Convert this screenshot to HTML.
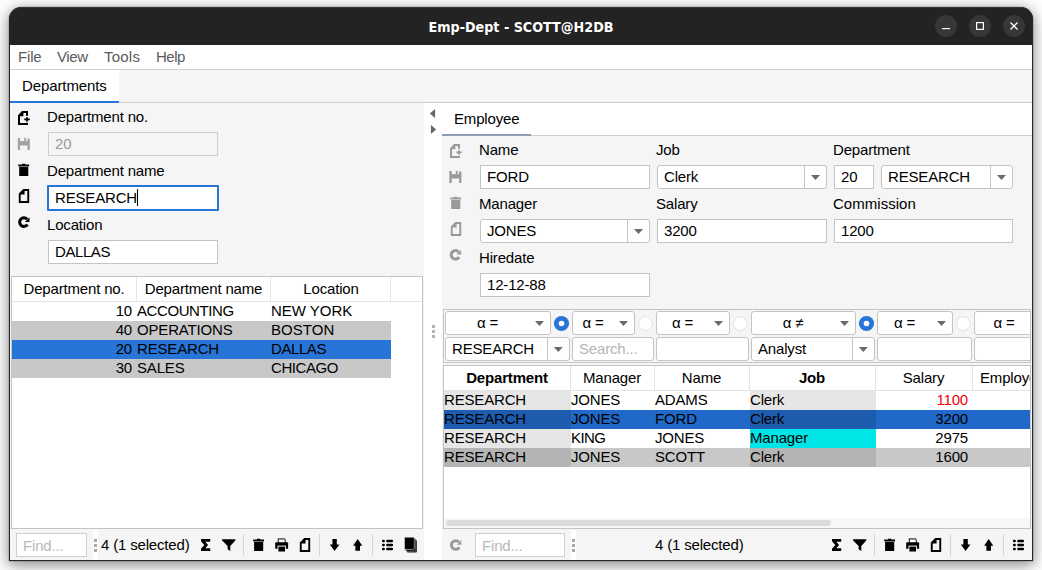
<!DOCTYPE html>
<html><head><meta charset="utf-8"><title>Emp-Dept - SCOTT@H2DB</title>
<style>
html,body{margin:0;padding:0}
body{width:1042px;height:570px;overflow:hidden;position:relative;background:#f0f0f0;font-family:"Liberation Sans",sans-serif;font-size:15px;letter-spacing:-0.17px;color:#000}
#stage{position:absolute;left:0;top:0;width:1042px;height:570px;overflow:hidden;background:#fdfdfd}
#stage div,#stage svg{position:absolute}
.t{white-space:nowrap;line-height:20px;height:20px}
.title{color:#fff;letter-spacing:0;font-family:"DejaVu Sans Condensed","DejaVu Sans","Liberation Sans",sans-serif;font-weight:bold;font-size:14.2px;text-align:center}
#win{border-radius:12.5px 12.5px 0 0;box-shadow:0 3px 14px 1px rgba(0,0,0,.45),0 0 0 1px rgba(0,0,0,.10);background:#f5f5f5}
#frame{border-radius:12.5px 12.5px 0 0;box-sizing:border-box;border:1px solid #262626;border-top:none;pointer-events:none}
</style></head><body><div id="stage">
<div id="win" style="left:9px;top:7px;width:1024px;height:554px"></div>
<div style="left:9px;top:7px;width:1024px;height:38px;background:#232323;border-radius:12.5px 12.5px 0 0;box-shadow:inset 0 1px 0 #343434"></div>
<div class="title" style="left:9px;top:8px;width:1024px;height:38px;line-height:38px">Emp-Dept - SCOTT@H2DB</div>
<svg style="left:935px;top:15px" width="22" height="22" viewBox="0 0 22 22"><circle cx="11" cy="11" r="11" fill="#373737"/><path d="M7,13.6 H15" stroke="#fff" stroke-width="1.2"/></svg>
<svg style="left:969px;top:15px" width="22" height="22" viewBox="0 0 22 22"><circle cx="11" cy="11" r="11" fill="#373737"/><rect x="7.6" y="7.6" width="6.8" height="6.8" fill="none" stroke="#fff" stroke-width="1.2"/></svg>
<svg style="left:1003px;top:15px" width="22" height="22" viewBox="0 0 22 22"><circle cx="11" cy="11" r="11" fill="#373737"/><path d="M7.5,7.5 L14.5,14.5 M14.5,7.5 L7.5,14.5" stroke="#fff" stroke-width="1.3"/></svg>
<div style="left:10px;top:45px;width:1022px;height:515px;background:#f5f5f5"></div>
<div style="left:10px;top:45px;width:1022px;height:24px;background:#fff"></div>
<div style="left:10px;top:69px;width:1022px;height:1px;background:#d0d0d0"></div>
<div class="t" style="left:18px;top:47px;color:#5a5a5a">File</div>
<div class="t" style="left:57px;top:47px;letter-spacing:-0.42px;color:#5a5a5a">View</div>
<div class="t" style="left:104px;top:47px;letter-spacing:0.23px;color:#5a5a5a">Tools</div>
<div class="t" style="left:156px;top:47px;letter-spacing:-0.52px;color:#5a5a5a">Help</div>
<div style="left:10px;top:70px;width:109px;height:33px;background:#fff"></div>
<div style="left:10px;top:102px;width:1022px;height:1px;background:#cfcfcf"></div>
<div style="left:10px;top:101px;width:109px;height:2px;background:#2675d7"></div>
<div class="t" style="left:22px;top:76px;letter-spacing:-0.10px;">Departments</div>
<svg style="left:13px;top:108px" width="21" height="21" viewBox="0 0 21 21" fill="#000"><path fill-rule="evenodd" d="M9,3 H15 V17 H5 V7.2 Z M10.4,5 H13 V15 H7 V8.3 H10.4 Z"/><rect x="12.6" y="7.8" width="3" height="7" fill="#f5f5f5"/><path d="M11.3,11.4 H16.8 M13.9,9.2 V13.6" stroke="#f5f5f5" stroke-width="3.6" fill="none"/><path d="M11.3,11.4 H16.8 M13.9,9.2 V13.6" stroke="#000" stroke-width="1.8" fill="none"/></svg>
<svg style="left:13px;top:133px" width="21" height="21" viewBox="0 0 21 21" fill="#a2a2a2"><g transform="translate(0.80,0.90)"><path d="M4,4 H14.4 L16,5.6 V16 H4 Z"/><rect x="6.3" y="3.5" width="7.4" height="3.7" fill="#f5f5f5"/><rect x="10.4" y="4" width="1.8" height="3.2"/><rect x="6.3" y="11.6" width="7.4" height="5" fill="#f5f5f5"/></g></svg>
<svg style="left:13px;top:160px" width="21" height="21" viewBox="0 0 21 21" fill="#000"><g transform="translate(0.70,0.00)"><path d="M8.4,3.7 H11.6 V4.4 H15.4 V6.5 H4.6 V4.4 H8.4 Z"/><path d="M5.5,7 H14.6 V15.4 Q14.6,16 14,16 H6.1 Q5.5,16 5.5,15.4 Z"/></g></svg>
<svg style="left:14px;top:186px" width="21" height="21" viewBox="0 0 21 21" fill="#000"><path fill-rule="evenodd" d="M9.2,3 H15.2 V17 H4.8 V7.4 Z M10.6,4.9 V8.6 H6.7 V15.1 H13.3 V4.9 Z"/></svg>
<svg style="left:13px;top:212px" width="21" height="21" viewBox="0 0 21 21" fill="#000"><g transform="translate(0.90,0.10)"><path fill="none" stroke="#000" stroke-width="3" d="M13.6,12.4 A4.3,4.3 0 1 1 13.2,7.1"/><path d="M15.6,5.2 V9.8 H11 Z"/></g></svg>
<div class="t" style="left:47px;top:107px;">Department no.</div>
<div style="left:48px;top:132px;width:170px;height:24px;background:#fff;border:1px solid #c4c4c4;box-sizing:border-box;background:#f5f5f5;border-color:#cfcfcf"></div>
<div class="t" style="left:55px;top:134px;color:#9a9a9a">20</div>
<div class="t" style="left:47px;top:161px;">Department name</div>
<div style="left:47px;top:185px;width:172px;height:26px;background:#fff;border:2px solid #2675d7;box-sizing:border-box;border-radius:1px"></div>
<div class="t" style="left:55px;top:188px;">RESEARCH</div>
<div style="left:137px;top:189px;width:1px;height:17px;background:#000"></div>
<div class="t" style="left:47px;top:215px;">Location</div>
<div style="left:48px;top:240px;width:170px;height:24px;background:#fff;border:1px solid #c4c4c4;box-sizing:border-box;"></div>
<div class="t" style="left:55px;top:242px;letter-spacing:-0.42px;">DALLAS</div>
<div style="left:11px;top:276px;width:412px;height:253px;background:#fff;border:1px solid #c4c4c4;box-sizing:border-box"></div>
<div style="left:12px;top:301px;width:410px;height:1px;background:#e4e4e4"></div>
<div style="left:136px;top:277px;width:1px;height:24px;background:#e4e4e4"></div>
<div style="left:270px;top:277px;width:1px;height:24px;background:#e4e4e4"></div>
<div style="left:390px;top:277px;width:1px;height:24px;background:#e4e4e4"></div>
<div class="t" style="left:12px;top:279px;width:124px;text-align:center">Department no.</div>
<div class="t" style="left:137px;top:279px;width:133px;text-align:center">Department name</div>
<div class="t" style="left:271px;top:279px;width:120px;text-align:center">Location</div>
<div style="left:12px;top:302px;width:379px;height:19px;background:#fff"></div>
<div class="t" style="left:12px;top:301px;width:120px;text-align:right">10</div>
<div class="t" style="left:137px;top:301px;letter-spacing:-0.42px;">ACCOUNTING</div>
<div class="t" style="left:271px;top:301px;letter-spacing:-0.02px;">NEW YORK</div>
<div style="left:12px;top:321px;width:379px;height:19px;background:#c8c8c8"></div>
<div class="t" style="left:12px;top:320px;width:120px;text-align:right">40</div>
<div class="t" style="left:137px;top:320px;">OPERATIONS</div>
<div class="t" style="left:271px;top:320px;letter-spacing:0.03px;">BOSTON</div>
<div style="left:12px;top:340px;width:379px;height:19px;background:#2675d7"></div>
<div class="t" style="left:12px;top:339px;width:120px;text-align:right">20</div>
<div class="t" style="left:137px;top:339px;">RESEARCH</div>
<div class="t" style="left:271px;top:339px;letter-spacing:-0.42px;">DALLAS</div>
<div style="left:12px;top:359px;width:379px;height:19px;background:#c8c8c8"></div>
<div class="t" style="left:12px;top:358px;width:120px;text-align:right">30</div>
<div class="t" style="left:137px;top:358px;">SALES</div>
<div class="t" style="left:271px;top:358px;letter-spacing:-0.42px;">CHICAGO</div>
<div style="left:16px;top:533px;width:71px;height:24px;background:#fff;border:1px solid #c4c4c4;box-sizing:border-box;border-color:#cfcfcf"></div>
<div class="t" style="left:23px;top:536px;color:#b8b8b8">Find...</div>
<div style="left:93px;top:530px;width:5px;height:30px;background:#fff"></div>
<div style="left:94px;top:539px;width:3px;height:3px;background:#a8a8a8"></div>
<div style="left:94px;top:544px;width:3px;height:3px;background:#a8a8a8"></div>
<div style="left:94px;top:549px;width:3px;height:3px;background:#a8a8a8"></div>
<div class="t" style="left:101px;top:535px;">4 (1 selected)</div>
<svg style="left:195px;top:535px" width="21" height="21" viewBox="0 0 21 21" fill="#000"><g transform="translate(0.40,0.00)"><path d="M5.6,4 H14.8 V6.7 H9.9 L12.7,10 L9.9,13.3 H14.8 V16 H5.6 V13.8 L8.9,10 L5.6,6.2 Z"/></g></svg>
<svg style="left:218px;top:535px" width="21" height="21" viewBox="0 0 21 21" fill="#000"><g transform="translate(0.40,0.00)"><path d="M3.9,4.2 H16.7 Q17.4,4.7 16.9,5.4 L11.9,10.9 V15.9 L9.2,14.3 V10.9 L3.7,5.4 Q3.2,4.7 3.9,4.2 Z"/></g></svg>
<div style="left:243px;top:534px;width:1px;height:22px;background:#d4d4d4"></div>
<svg style="left:248px;top:535px" width="21" height="21" viewBox="0 0 21 21" fill="#000"><g transform="translate(0.60,0.00)"><path d="M8.4,3.7 H11.6 V4.4 H15.4 V6.5 H4.6 V4.4 H8.4 Z"/><path d="M5.5,7 H14.6 V15.4 Q14.6,16 14,16 H6.1 Q5.5,16 5.5,15.4 Z"/></g></svg>
<svg style="left:271px;top:535px" width="21" height="21" viewBox="0 0 21 21" fill="#000"><g transform="translate(0.10,0.00)"><path d="M6.6,3.2 H13.6 L14.8,4.4 V8 H6.6 Z" fill="#444"/><rect x="7.9" y="4.6" width="5.6" height="3.4" fill="#fff"/><path d="M5.1,7.3 H16 Q17,7.3 17,8.3 V13.7 H4.1 V8.3 Q4.1,7.3 5.1,7.3 Z"/><rect x="6.4" y="10.6" width="8.4" height="6.4" fill="#f5f5f5"/><rect x="7.3" y="11.6" width="6.6" height="4.9"/></g></svg>
<svg style="left:295px;top:535px" width="21" height="21" viewBox="0 0 21 21" fill="#000"><path fill-rule="evenodd" d="M9.2,3 H15.2 V17 H4.8 V7.4 Z M10.6,4.9 V8.6 H6.7 V15.1 H13.3 V4.9 Z"/></svg>
<div style="left:319px;top:534px;width:1px;height:22px;background:#d4d4d4"></div>
<svg style="left:324px;top:535px" width="21" height="21" viewBox="0 0 21 21" fill="#000"><g transform="translate(0.60,0.00)"><path d="M7.8,4 H12.2 V9.4 H14.8 L10,16.1 L5.2,9.4 H7.8 Z"/></g></svg>
<svg style="left:347px;top:535px" width="21" height="21" viewBox="0 0 21 21" fill="#000"><g transform="translate(0.70,0.00)"><path d="M7.7,15.8 H12.3 V10.8 H14.6 L10,3.9 L5.4,10.8 H7.7 Z"/></g></svg>
<div style="left:372px;top:534px;width:1px;height:22px;background:#d4d4d4"></div>
<svg style="left:377px;top:535px" width="21" height="21" viewBox="0 0 21 21" fill="#000"><g transform="translate(0.60,0.00)"><rect x="4.4" y="4.7" width="2.8" height="2.5" rx="1"/><rect x="8.6" y="4.7" width="6.8" height="2.5" rx="1"/><rect x="4.4" y="8.7" width="2.8" height="2.5" rx="1"/><rect x="8.6" y="8.7" width="6.8" height="2.5" rx="1"/><rect x="4.4" y="12.8" width="2.8" height="2.5" rx="1"/><rect x="8.6" y="12.8" width="6.8" height="2.5" rx="1"/></g></svg>
<svg style="left:400px;top:535px" width="21" height="21" viewBox="0 0 21 21" fill="#000"><g transform="translate(0.50,0.00)"><rect x="6.4" y="4.9" width="10" height="12.6" rx="1" fill="#222"/><rect x="5.3" y="3.7" width="9.9" height="12.4" rx="1" stroke="#aaa" stroke-width=".5"/><rect x="4" y="2.2" width="9.8" height="12.2" rx="1" stroke="#ddd" stroke-width=".6"/></g></svg>
<div style="left:424px;top:103px;width:18px;height:457px;background:#fff"></div>
<svg style="left:428px;top:108px" width="10" height="28" viewBox="0 0 10 28" fill="#666"><path d="M7.1,1.1 V9.9 L1.8,5.5 Z M2.9,17 V26 L8.2,21.5 Z"/></svg>
<div style="left:432px;top:325px;width:3px;height:3px;background:#b4b4b4"></div>
<div style="left:432px;top:330px;width:3px;height:3px;background:#b4b4b4"></div>
<div style="left:432px;top:335px;width:3px;height:3px;background:#b4b4b4"></div>
<div style="left:442px;top:103px;width:590px;height:32px;background:#fff"></div>
<div style="left:442px;top:135px;width:590px;height:1px;background:#cfcfcf"></div>
<div style="left:442px;top:134px;width:89px;height:2px;background:#8d9db8"></div>
<div class="t" style="left:454px;top:109px;">Employee</div>
<svg style="left:445px;top:141px" width="21" height="21" viewBox="0 0 21 21" fill="#9a9a9a"><path fill-rule="evenodd" d="M9,3 H15 V17 H5 V7.2 Z M10.4,5 H13 V15 H7 V8.3 H10.4 Z"/><rect x="12.6" y="7.8" width="3" height="7" fill="#f5f5f5"/><path d="M11.3,11.4 H16.8 M13.9,9.2 V13.6" stroke="#f5f5f5" stroke-width="3.6" fill="none"/><path d="M11.3,11.4 H16.8 M13.9,9.2 V13.6" stroke="#9a9a9a" stroke-width="1.8" fill="none"/></svg>
<svg style="left:445px;top:166px" width="21" height="21" viewBox="0 0 21 21" fill="#9a9a9a"><g transform="translate(0.40,0.90)"><path d="M4,4 H14.4 L16,5.6 V16 H4 Z"/><rect x="6.3" y="3.5" width="7.4" height="3.7" fill="#f5f5f5"/><rect x="10.4" y="4" width="1.8" height="3.2"/><rect x="6.3" y="11.6" width="7.4" height="5" fill="#f5f5f5"/></g></svg>
<svg style="left:445px;top:193px" width="21" height="21" viewBox="0 0 21 21" fill="#9a9a9a"><g transform="translate(0.70,0.00)"><path d="M8.4,3.7 H11.6 V4.4 H15.4 V6.5 H4.6 V4.4 H8.4 Z"/><path d="M5.5,7 H14.6 V15.4 Q14.6,16 14,16 H6.1 Q5.5,16 5.5,15.4 Z"/></g></svg>
<svg style="left:446px;top:219px" width="21" height="21" viewBox="0 0 21 21" fill="#9a9a9a"><path fill-rule="evenodd" d="M9.2,3 H15.2 V17 H4.8 V7.4 Z M10.6,4.9 V8.6 H6.7 V15.1 H13.3 V4.9 Z"/></svg>
<svg style="left:445px;top:244px" width="21" height="21" viewBox="0 0 21 21" fill="#9a9a9a"><g transform="translate(0.50,0.80)"><path fill="none" stroke="#9a9a9a" stroke-width="3" d="M13.6,12.4 A4.3,4.3 0 1 1 13.2,7.1"/><path d="M15.6,5.2 V9.8 H11 Z"/></g></svg>
<div class="t" style="left:479px;top:140px;">Name</div>
<div class="t" style="left:656px;top:140px;">Job</div>
<div class="t" style="left:833px;top:140px;">Department</div>
<div style="left:480px;top:165px;width:170px;height:24px;background:#fff;border:1px solid #c4c4c4;box-sizing:border-box;"></div>
<div class="t" style="left:487px;top:167px;">FORD</div>
<div style="left:657px;top:165px;width:170px;height:24px;background:#fff;border:1px solid #c4c4c4;box-sizing:border-box;border-radius:3px"></div>
<div style="left:804px;top:166px;width:1px;height:22px;background:#c4c4c4"></div>
<svg style="left:809px;top:173px" width="12" height="8" viewBox="0 0 12 8" fill="#6a6a6a"><path d="M2.00,2.10 H11.00 L6.50,7.10 Z"/></svg>
<div class="t" style="left:664px;top:167px;">Clerk</div>
<div style="left:834px;top:165px;width:40px;height:24px;background:#fff;border:1px solid #c4c4c4;box-sizing:border-box;"></div>
<div class="t" style="left:841px;top:167px;">20</div>
<div style="left:881px;top:165px;width:132px;height:24px;background:#fff;border:1px solid #c4c4c4;box-sizing:border-box;border-radius:3px"></div>
<div style="left:990px;top:166px;width:1px;height:22px;background:#c4c4c4"></div>
<svg style="left:995px;top:173px" width="12" height="8" viewBox="0 0 12 8" fill="#6a6a6a"><path d="M2.00,2.10 H11.00 L6.50,7.10 Z"/></svg>
<div class="t" style="left:888px;top:167px;">RESEARCH</div>
<div class="t" style="left:479px;top:194px;">Manager</div>
<div class="t" style="left:656px;top:194px;">Salary</div>
<div class="t" style="left:833px;top:194px;letter-spacing:0.03px;">Commission</div>
<div style="left:480px;top:219px;width:170px;height:24px;background:#fff;border:1px solid #c4c4c4;box-sizing:border-box;border-radius:3px"></div>
<div style="left:627px;top:220px;width:1px;height:22px;background:#c4c4c4"></div>
<svg style="left:632px;top:227px" width="12" height="8" viewBox="0 0 12 8" fill="#6a6a6a"><path d="M2.00,2.10 H11.00 L6.50,7.10 Z"/></svg>
<div class="t" style="left:487px;top:221px;">JONES</div>
<div style="left:657px;top:219px;width:170px;height:24px;background:#fff;border:1px solid #c4c4c4;box-sizing:border-box;"></div>
<div class="t" style="left:664px;top:221px;">3200</div>
<div style="left:834px;top:219px;width:179px;height:24px;background:#fff;border:1px solid #c4c4c4;box-sizing:border-box;"></div>
<div class="t" style="left:841px;top:221px;">1200</div>
<div class="t" style="left:479px;top:248px;">Hiredate</div>
<div style="left:480px;top:273px;width:170px;height:24px;background:#fff;border:1px solid #c4c4c4;box-sizing:border-box;"></div>
<div class="t" style="left:487px;top:275px;">12-12-88</div>
<div style="left:443px;top:309px;width:588px;height:54px;background:#f5f5f5;border:1px solid #c4c4c4;box-sizing:border-box"></div>
<div style="left:0;top:0;width:1030px;height:570px;overflow:hidden">
<div style="left:445px;top:311px;width:106px;height:24px;background:#fff;border:1px solid #c4c4c4;box-sizing:border-box;border-radius:3px"></div>
<svg style="left:533px;top:319px" width="12" height="8" viewBox="0 0 12 8" fill="#6a6a6a"><path d="M2.00,1.90 H11.00 L6.50,6.90 Z"/></svg>
<div class="t" style="left:446px;top:313px;width:83px;text-align:center">α =</div>
<svg style="left:551px;top:313px" width="20" height="20" viewBox="0 0 20 20"><circle cx="10.5" cy="10.5" r="7.6" fill="#2675d7"/><circle cx="10.5" cy="10.5" r="2.8" fill="#fff"/></svg>
<div style="left:445px;top:337px;width:125px;height:24px;background:#fff;border:1px solid #c4c4c4;box-sizing:border-box;border-radius:3px"></div>
<div style="left:547px;top:338px;width:1px;height:22px;background:#c4c4c4"></div>
<svg style="left:552px;top:345px" width="12" height="8" viewBox="0 0 12 8" fill="#6a6a6a"><path d="M1.80,1.90 H10.80 L6.30,6.90 Z"/></svg>
<div class="t" style="left:452px;top:339px;">RESEARCH</div>
<div style="left:572px;top:311px;width:63px;height:24px;background:#fff;border:1px solid #c4c4c4;box-sizing:border-box;border-radius:3px"></div>
<svg style="left:617px;top:319px" width="12" height="8" viewBox="0 0 12 8" fill="#6a6a6a"><path d="M2.00,1.90 H11.00 L6.50,6.90 Z"/></svg>
<div class="t" style="left:573px;top:313px;width:40px;text-align:center">α =</div>
<svg style="left:635px;top:313px" width="20" height="20" viewBox="0 0 20 20"><circle cx="10.399999999999977" cy="10.5" r="6.9" fill="#fff" stroke="#e2e2e2" stroke-width="1"/></svg>
<div style="left:572px;top:337px;width:82px;height:24px;background:#fff;border:1px solid #c4c4c4;box-sizing:border-box;border-radius:3px"></div>
<div class="t" style="left:579px;top:339px;color:#b4b4b4">Search...</div>
<div style="left:656px;top:311px;width:74px;height:24px;background:#fff;border:1px solid #c4c4c4;box-sizing:border-box;border-radius:3px"></div>
<svg style="left:712px;top:319px" width="12" height="8" viewBox="0 0 12 8" fill="#6a6a6a"><path d="M2.00,1.90 H11.00 L6.50,6.90 Z"/></svg>
<div class="t" style="left:657px;top:313px;width:51px;text-align:center">α =</div>
<svg style="left:730px;top:313px" width="20" height="20" viewBox="0 0 20 20"><circle cx="10.299999999999955" cy="10.5" r="6.9" fill="#fff" stroke="#e2e2e2" stroke-width="1"/></svg>
<div style="left:656px;top:337px;width:93px;height:24px;background:#fff;border:1px solid #c4c4c4;box-sizing:border-box;border-radius:3px"></div>
<div style="left:751px;top:311px;width:105px;height:24px;background:#fff;border:1px solid #c4c4c4;box-sizing:border-box;border-radius:3px"></div>
<svg style="left:838px;top:319px" width="12" height="8" viewBox="0 0 12 8" fill="#6a6a6a"><path d="M2.00,1.90 H11.00 L6.50,6.90 Z"/></svg>
<div class="t" style="left:752px;top:313px;width:82px;text-align:center">α ≠</div>
<svg style="left:856px;top:313px" width="20" height="20" viewBox="0 0 20 20"><circle cx="10.5" cy="10.5" r="7.6" fill="#2675d7"/><circle cx="10.5" cy="10.5" r="2.8" fill="#fff"/></svg>
<div style="left:751px;top:337px;width:124px;height:24px;background:#fff;border:1px solid #c4c4c4;box-sizing:border-box;border-radius:3px"></div>
<div style="left:852px;top:338px;width:1px;height:22px;background:#c4c4c4"></div>
<svg style="left:857px;top:345px" width="12" height="8" viewBox="0 0 12 8" fill="#6a6a6a"><path d="M1.80,1.90 H10.80 L6.30,6.90 Z"/></svg>
<div class="t" style="left:758px;top:339px;">Analyst</div>
<div style="left:877px;top:311px;width:76px;height:24px;background:#fff;border:1px solid #c4c4c4;box-sizing:border-box;border-radius:3px"></div>
<svg style="left:935px;top:319px" width="12" height="8" viewBox="0 0 12 8" fill="#6a6a6a"><path d="M2.00,1.90 H11.00 L6.50,6.90 Z"/></svg>
<div class="t" style="left:878px;top:313px;width:53px;text-align:center">α =</div>
<svg style="left:953px;top:313px" width="20" height="20" viewBox="0 0 20 20"><circle cx="10.299999999999955" cy="10.5" r="6.9" fill="#fff" stroke="#e2e2e2" stroke-width="1"/></svg>
<div style="left:877px;top:337px;width:95px;height:24px;background:#fff;border:1px solid #c4c4c4;box-sizing:border-box;border-radius:3px"></div>
<div style="left:974px;top:311px;width:81px;height:24px;background:#fff;border:1px solid #c4c4c4;box-sizing:border-box;border-radius:3px"></div>
<svg style="left:1037px;top:319px" width="12" height="8" viewBox="0 0 12 8" fill="#6a6a6a"><path d="M2.00,1.90 H11.00 L6.50,6.90 Z"/></svg>
<div class="t" style="left:975px;top:313px;width:58px;text-align:center">α =</div>
<div style="left:974px;top:337px;width:102px;height:24px;background:#fff;border:1px solid #c4c4c4;box-sizing:border-box;border-radius:3px"></div>
</div>
<div style="left:443px;top:365px;width:588px;height:164px;background:#fff;border:1px solid #c4c4c4;box-sizing:border-box"></div>
<div style="left:444px;top:390px;width:586px;height:1px;background:#e4e4e4"></div>
<div style="left:0;top:0;width:1030px;height:570px;overflow:hidden">
<div style="left:570px;top:366px;width:1px;height:24px;background:#e4e4e4"></div>
<div class="t" style="left:444px;top:368px;width:126px;text-align:center;font-weight:bold">Department</div>
<div style="left:654px;top:366px;width:1px;height:24px;background:#e4e4e4"></div>
<div class="t" style="left:570px;top:368px;width:84px;text-align:center;">Manager</div>
<div style="left:749px;top:366px;width:1px;height:24px;background:#e4e4e4"></div>
<div class="t" style="left:654px;top:368px;width:95px;text-align:center;">Name</div>
<div style="left:875px;top:366px;width:1px;height:24px;background:#e4e4e4"></div>
<div class="t" style="left:749px;top:368px;width:126px;text-align:center;font-weight:bold">Job</div>
<div style="left:972px;top:366px;width:1px;height:24px;background:#e4e4e4"></div>
<div class="t" style="left:875px;top:368px;width:97px;text-align:center;">Salary</div>
<div class="t" style="left:980px;top:368px;">Employee</div>
<div style="left:444px;top:391px;width:586px;height:19px;background:#fff"></div>
<div style="left:444px;top:391px;width:127px;height:19px;background:#e6e6e6"></div>
<div style="left:750px;top:391px;width:126px;height:19px;background:#e6e6e6"></div>
<div class="t" style="left:444px;top:390px;">RESEARCH</div>
<div class="t" style="left:571px;top:390px;">JONES</div>
<div class="t" style="left:655px;top:390px;">ADAMS</div>
<div class="t" style="left:750px;top:390px;">Clerk</div>
<div class="t" style="left:876px;top:390px;width:92px;text-align:right;color:#f6000c">1100</div>
<div style="left:444px;top:410px;width:586px;height:19px;background:#2169c8"></div>
<div style="left:444px;top:410px;width:127px;height:19px;background:#1d5cae"></div>
<div style="left:750px;top:410px;width:126px;height:19px;background:#1d5cae"></div>
<div class="t" style="left:444px;top:409px;">RESEARCH</div>
<div class="t" style="left:571px;top:409px;">JONES</div>
<div class="t" style="left:655px;top:409px;">FORD</div>
<div class="t" style="left:750px;top:409px;">Clerk</div>
<div class="t" style="left:876px;top:409px;width:92px;text-align:right;">3200</div>
<div style="left:444px;top:429px;width:586px;height:19px;background:#fff"></div>
<div style="left:444px;top:429px;width:127px;height:19px;background:#e6e6e6"></div>
<div style="left:750px;top:429px;width:126px;height:19px;background:#00e5e5"></div>
<div class="t" style="left:444px;top:428px;">RESEARCH</div>
<div class="t" style="left:571px;top:428px;letter-spacing:-0.57px;">KING</div>
<div class="t" style="left:655px;top:428px;">JONES</div>
<div class="t" style="left:750px;top:428px;">Manager</div>
<div class="t" style="left:876px;top:428px;width:92px;text-align:right;">2975</div>
<div style="left:444px;top:448px;width:586px;height:19px;background:#c8c8c8"></div>
<div style="left:444px;top:448px;width:127px;height:19px;background:#b4b4b4"></div>
<div style="left:750px;top:448px;width:126px;height:19px;background:#b4b4b4"></div>
<div class="t" style="left:444px;top:447px;">RESEARCH</div>
<div class="t" style="left:571px;top:447px;">JONES</div>
<div class="t" style="left:655px;top:447px;">SCOTT</div>
<div class="t" style="left:750px;top:447px;">Clerk</div>
<div class="t" style="left:876px;top:447px;width:92px;text-align:right;">1600</div>
<div style="left:444px;top:518px;width:586px;height:10px;background:#f7f7f7"></div>
<div style="left:446px;top:520px;width:385px;height:6px;background:#dcdcdc;border-radius:3px"></div>
</div>
<svg style="left:445px;top:535px" width="21" height="21" viewBox="0 0 21 21" fill="#9a9a9a"><g transform="translate(0.70,0.00)"><path fill="none" stroke="#9a9a9a" stroke-width="3" d="M13.6,12.4 A4.3,4.3 0 1 1 13.2,7.1"/><path d="M15.6,5.2 V9.8 H11 Z"/></g></svg>
<div style="left:475px;top:533px;width:90px;height:24px;background:#fff;border:1px solid #c4c4c4;box-sizing:border-box;border-color:#cfcfcf"></div>
<div class="t" style="left:482px;top:536px;color:#b8b8b8">Find...</div>
<div style="left:571px;top:530px;width:5px;height:30px;background:#fff"></div>
<div style="left:572px;top:539px;width:3px;height:3px;background:#a8a8a8"></div>
<div style="left:572px;top:544px;width:3px;height:3px;background:#a8a8a8"></div>
<div style="left:572px;top:549px;width:3px;height:3px;background:#a8a8a8"></div>
<div class="t" style="left:655px;top:535px;">4 (1 selected)</div>
<svg style="left:826px;top:535px" width="21" height="21" viewBox="0 0 21 21" fill="#000"><g transform="translate(0.40,0.00)"><path d="M5.6,4 H14.8 V6.7 H9.9 L12.7,10 L9.9,13.3 H14.8 V16 H5.6 V13.8 L8.9,10 L5.6,6.2 Z"/></g></svg>
<svg style="left:849px;top:535px" width="21" height="21" viewBox="0 0 21 21" fill="#000"><g transform="translate(0.40,0.00)"><path d="M3.9,4.2 H16.7 Q17.4,4.7 16.9,5.4 L11.9,10.9 V15.9 L9.2,14.3 V10.9 L3.7,5.4 Q3.2,4.7 3.9,4.2 Z"/></g></svg>
<div style="left:874px;top:534px;width:1px;height:22px;background:#d4d4d4"></div>
<svg style="left:879px;top:535px" width="21" height="21" viewBox="0 0 21 21" fill="#000"><g transform="translate(0.60,0.00)"><path d="M8.4,3.7 H11.6 V4.4 H15.4 V6.5 H4.6 V4.4 H8.4 Z"/><path d="M5.5,7 H14.6 V15.4 Q14.6,16 14,16 H6.1 Q5.5,16 5.5,15.4 Z"/></g></svg>
<svg style="left:902px;top:535px" width="21" height="21" viewBox="0 0 21 21" fill="#000"><g transform="translate(0.10,0.00)"><path d="M6.6,3.2 H13.6 L14.8,4.4 V8 H6.6 Z" fill="#444"/><rect x="7.9" y="4.6" width="5.6" height="3.4" fill="#fff"/><path d="M5.1,7.3 H16 Q17,7.3 17,8.3 V13.7 H4.1 V8.3 Q4.1,7.3 5.1,7.3 Z"/><rect x="6.4" y="10.6" width="8.4" height="6.4" fill="#f5f5f5"/><rect x="7.3" y="11.6" width="6.6" height="4.9"/></g></svg>
<svg style="left:926px;top:535px" width="21" height="21" viewBox="0 0 21 21" fill="#000"><path fill-rule="evenodd" d="M9.2,3 H15.2 V17 H4.8 V7.4 Z M10.6,4.9 V8.6 H6.7 V15.1 H13.3 V4.9 Z"/></svg>
<div style="left:950px;top:534px;width:1px;height:22px;background:#d4d4d4"></div>
<svg style="left:955px;top:535px" width="21" height="21" viewBox="0 0 21 21" fill="#000"><g transform="translate(0.60,0.00)"><path d="M7.8,4 H12.2 V9.4 H14.8 L10,16.1 L5.2,9.4 H7.8 Z"/></g></svg>
<svg style="left:978px;top:535px" width="21" height="21" viewBox="0 0 21 21" fill="#000"><g transform="translate(0.70,0.00)"><path d="M7.7,15.8 H12.3 V10.8 H14.6 L10,3.9 L5.4,10.8 H7.7 Z"/></g></svg>
<div style="left:1003px;top:534px;width:1px;height:22px;background:#d4d4d4"></div>
<svg style="left:1008px;top:535px" width="21" height="21" viewBox="0 0 21 21" fill="#000"><g transform="translate(0.60,0.00)"><rect x="4.4" y="4.7" width="2.8" height="2.5" rx="1"/><rect x="8.6" y="4.7" width="6.8" height="2.5" rx="1"/><rect x="4.4" y="8.7" width="2.8" height="2.5" rx="1"/><rect x="8.6" y="8.7" width="6.8" height="2.5" rx="1"/><rect x="4.4" y="12.8" width="2.8" height="2.5" rx="1"/><rect x="8.6" y="12.8" width="6.8" height="2.5" rx="1"/></g></svg>
<div id="frame" style="left:9px;top:7px;width:1024px;height:554px"></div>
</div></body></html>
